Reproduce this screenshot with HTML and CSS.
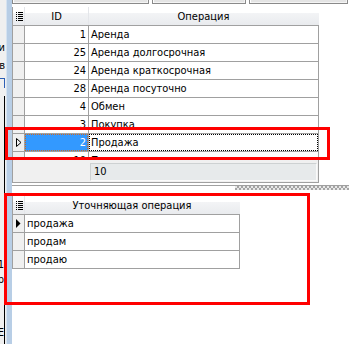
FILE: index.html
```html
<!DOCTYPE html>
<html>
<head>
<meta charset="utf-8">
<link rel="stylesheet" href="styles.css">
</head>
<body>
<div class="app">
  <div class="side">
    <div class="strip">
      <div class="frag f-a">Операции</div>
      <div class="frag f-b">Тип в</div>
      <div class="tbox"></div>
      <div class="low">
        <div class="frag f-c">1</div>
        <div class="frag f-d">р</div>
        <div class="frag f-e">Е</div>
      </div>
    </div>
    <div class="bar"></div>
  </div>
  <div class="main">
    <div class="buttons">
      <div class="btn b1"></div>
      <div class="btn b2"></div>
      <div class="btn b3"></div>
    </div>
    <div class="pane1">
      <div class="grid g1">
        <div class="hdr">
          <div class="hc hi"><svg class="chooser" width="7" height="9" viewBox="0 0 7 9"><g fill="#000"><rect x="0" y="0" width="1" height="1"/><rect x="2" y="0" width="5" height="1"/><rect x="0" y="2" width="1" height="1"/><rect x="2" y="2" width="5" height="1"/><rect x="0" y="4" width="1" height="1"/><rect x="2" y="4" width="5" height="1"/><rect x="0" y="6" width="1" height="1"/><rect x="2" y="6" width="5" height="1"/><rect x="0" y="8" width="1" height="1"/><rect x="2" y="8" width="5" height="1"/></g></svg></div>
          <div class="hc">ID</div>
          <div class="hc last">Операция</div>
        </div>
        <div class="body">
          <div class="row"><div class="c ind"></div><div class="c id">1</div><div class="c op">Аренда</div></div>
          <div class="row"><div class="c ind"></div><div class="c id">25</div><div class="c op">Аренда долгосрочная</div></div>
          <div class="row"><div class="c ind"></div><div class="c id">24</div><div class="c op">Аренда краткосрочная</div></div>
          <div class="row"><div class="c ind"></div><div class="c id">28</div><div class="c op">Аренда посуточно</div></div>
          <div class="row"><div class="c ind"></div><div class="c id">4</div><div class="c op">Обмен</div></div>
          <div class="row"><div class="c ind"></div><div class="c id">3</div><div class="c op">Покупка</div></div>
          <div class="row"><div class="c ind"><svg width="6" height="9" viewBox="0 0 6 9"><path d="M0.5 0.5 L5 4.5 L0.5 8.5 Z" fill="none" stroke="#000" stroke-width="1"/></svg></div><div class="c id sel"><div class="in">2</div></div><div class="c op cur"><div class="in">Продажа</div></div></div>
          <div class="row"><div class="c ind"></div><div class="c id">10</div><div class="c op">Прочее</div></div>
        </div>
        <div class="foot"><div class="fbox">10</div></div>
      </div>
    </div>
    <div class="split"><div class="grip"></div></div>
    <div class="pane2">
      <div class="grid g2">
        <div class="hdr">
          <div class="hc hi"><svg class="chooser" width="7" height="9" viewBox="0 0 7 9"><g fill="#000"><rect x="0" y="0" width="1" height="1"/><rect x="2" y="0" width="5" height="1"/><rect x="0" y="2" width="1" height="1"/><rect x="2" y="2" width="5" height="1"/><rect x="0" y="4" width="1" height="1"/><rect x="2" y="4" width="5" height="1"/><rect x="0" y="6" width="1" height="1"/><rect x="2" y="6" width="5" height="1"/><rect x="0" y="8" width="1" height="1"/><rect x="2" y="8" width="5" height="1"/></g></svg></div>
          <div class="hc last">Уточняющая операция</div>
        </div>
        <div class="row"><div class="c ind"><svg width="5" height="9" viewBox="0 0 5 9"><path d="M0 0 L4.5 4.5 L0 9 Z" fill="#000"/></svg></div><div class="c op">продажа</div></div>
        <div class="row"><div class="c ind"></div><div class="c op">продам</div></div>
        <div class="row"><div class="c ind"></div><div class="c op">продаю</div></div>
      </div>
    </div>
  </div>
  <div class="mark m1"></div>
  <div class="mark m2"></div>
</div>
</body>
</html>
```
FILE: styles.css
```css
* { box-sizing: border-box; }
html, body { margin: 0; padding: 0; }
body {
  width: 349px;
  height: 344px;
  overflow: hidden;
  background: #fff;
  font-family: "DejaVu Sans Condensed", "DejaVu Sans", sans-serif;
  font-stretch: condensed;
  font-size: 11px;
  color: #000;
}
.app { position: relative; display: flex; height: 344px; }

/* left clipped window strip */
.side { display: flex; flex: none; width: 12px; }
.strip { width: 6px; background: #f0f0f0; display: flex; flex-direction: column; }
.bar { width: 6px; background: #b8cee6; border-left: 1px solid #d6e3f1; }
.frag {
  direction: rtl;
  overflow: hidden;
  white-space: nowrap;
  width: 5px;
  height: 13px;
  line-height: 13px;
}
.f-a { margin-top: 41px; }
.f-b { margin-top: 5px; }
.tbox { margin-top: 6px; width: 5px; height: 10px; border-top: 1px solid #2d5fb5; border-right: 1px solid #2d5fb5; }
.low { margin-top: 8px; flex: 1; width: 5px; border-right: 1px solid #000; }
.low .frag { width: 4px; }
.f-c { margin-top: 162px; }
.f-d { margin-top: 2px; }
.f-e { margin-top: 40px; }

/* main area */
.main { flex: 1; display: flex; flex-direction: column; min-width: 0; }
.buttons { display: flex; gap: 3px; height: 4px; flex: none; }
.btn {
  height: 4px;
  background: #e4e4e4;
  border: 1px solid #8a8a8a;
  border-top: none;
  box-shadow: inset 1px 0 #fff, inset -1px -1px #f4f4f4;
}
.b1 { width: 137px; }
.b2 { width: 94px; }
.b3 { width: 99px; }

.pane1 { height: 181px; flex: none; padding-top: 3px; }
.grid { border-left: 1px solid #a0a0a0; }
.g1 { width: 307px; }
.g2 { width: 228px; }

.hdr {
  display: grid;
  height: 19px;
  border-bottom: 1px solid #a0a0a0;
  background: linear-gradient(#ffffff 0, #ffffff 32%, #f3f4f6 33%, #e9ebee 100%);
}
.g1 .hdr, .g1 .row { grid-template-columns: 12px 64px 230px; }
.g2 .hdr, .g2 .row { grid-template-columns: 12px 215px; }
.hc {
  display: flex;
  align-items: center;
  justify-content: center;
  border-right: 1px solid #e4e6ea;
  white-space: nowrap;
}
.hc.hi { justify-content: flex-start; padding-left: 3px; }
.hc.last { border-right-color: transparent; }
.chooser { display: block; }

.body { height: 134px; overflow: hidden; }
.row { display: grid; height: 18px; }
.c {
  border-right: 1px solid #a0a0a0;
  border-bottom: 1px solid #a0a0a0;
  line-height: 17px;
  white-space: nowrap;
  overflow: hidden;
}
.ind { background: #f0f0f0; display: flex; align-items: center; padding-left: 3px; }
.ind svg { display: block; }
.id { text-align: right; padding-right: 2px; }
.op { padding-left: 2px; }

.c.sel, .c.cur { padding: 0; }
.in { height: 17px; outline-offset: -1px; }
.sel .in {
  background: #3399ff;
  color: #fff;
  padding-right: 2px;
  outline: 1px dotted #d2691e;
}
.cur .in {
  padding-left: 2px;
  outline: 1px dotted #000;
}

.foot {
  height: 23px;
  background: #f0f0f0;
  border-right: 1px solid #a0a0a0;
  border-bottom: 1px solid #a0a0a0;
  padding: 3px 0 0 77px;
}
.fbox {
  width: 227px;
  height: 18px;
  background: #e7eaeb;
  border: 1px solid;
  border-color: #cdd1d2 #fafafa #fafafa #cdd1d2;
  padding-left: 3px;
  line-height: 16px;
}

.split { height: 5px; flex: none; border-top: 1px solid #a0a0a0; display: flex; justify-content: flex-end; }
.grip {
  width: 114px;
  height: 4px;
  background: repeating-conic-gradient(#a4a4a4 0 25%, #e8e8e8 0 50%) 0 0 / 4px 4px;
}
.pane2 { flex: 1; padding-top: 6px; }

/* red annotation frames */
.mark { position: absolute; border: 3px solid #ff0000; }
.m1 { left: 5px; top: 127px; width: 325px; height: 33px; }
.m2 { left: 4px; top: 193px; width: 306px; height: 112px; }
```
